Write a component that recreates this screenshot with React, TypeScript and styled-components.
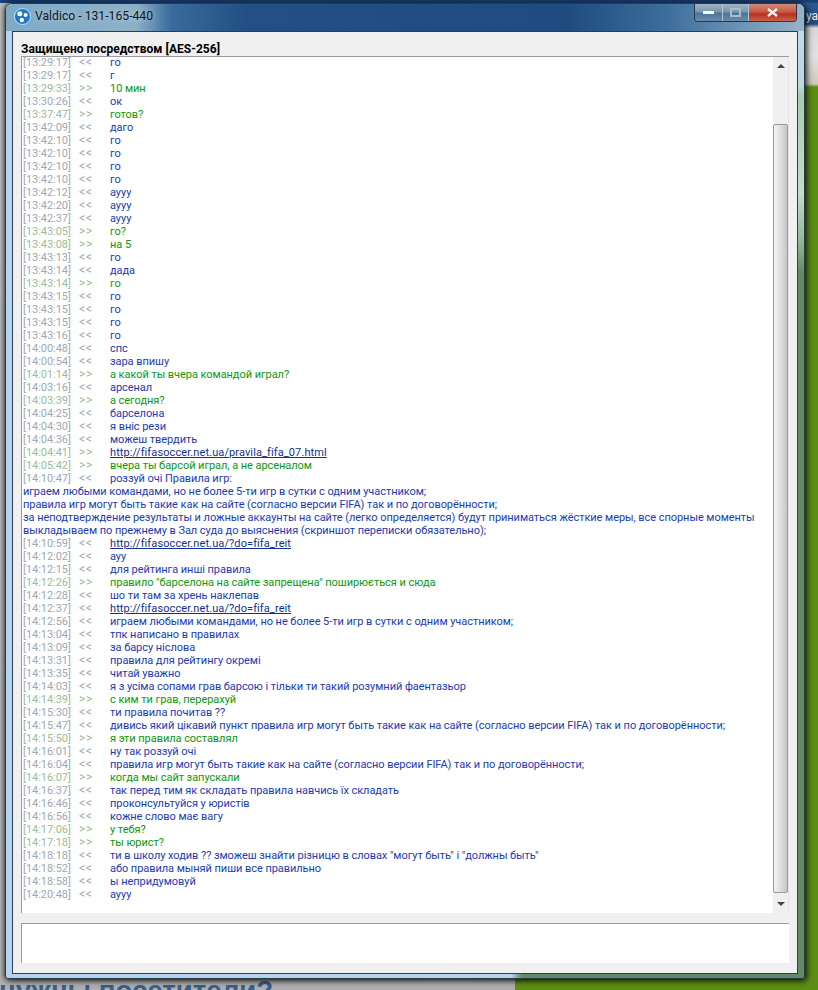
import React from "react";
import styled, { createGlobalStyle } from "styled-components";

const Global = createGlobalStyle`
  html, body { margin: 0; padding: 0; width: 818px; height: 990px; overflow: hidden; background: #5b8f14; }
  #root { width: 818px; height: 990px; }
  * { box-sizing: border-box; }
`;

const Desktop = styled.div`
  position: relative;
  width: 818px;
  height: 990px;
  overflow: hidden;
  padding: 3px 0 0 5px;
  background:
    linear-gradient(180deg, #17396b 0, #1d4a82 3px, transparent 3px) no-repeat 0 0 / 100% 3px,
    linear-gradient(180deg, #2a5d94 0, #1f4b80 24px, #d8d8d8 28px, #e2e2e2 56px, #cfcabb 84px, #5b8f14 87px, #5b8f14 100%) no-repeat right top / 303px 100%,
    linear-gradient(180deg, #b8b8b8, #aeb0b0) no-repeat 0 0 / 515px 100%,
    #5b8f14;
  font-family: "Roboto", Tahoma, sans-serif;
`;

const BehindHeadline = styled.div`
  position: absolute;
  left: -1px;
  top: 975px;
  height: 15px;
  overflow: hidden;
  font: bold 27.6px/32px "Liberation Sans", Arial, sans-serif;
  color: #3c5e88;
  white-space: nowrap;
`;

const BehindTab = styled.div`
  position: absolute;
  right: 0;
  top: 9px;
  font: 12px/14px "Roboto", sans-serif;
  color: #e8eef4;
  white-space: nowrap;
`;

const Frame = styled.div`
  position: relative;
  display: flex;
  flex-direction: column;
  width: 800px;
  height: 976px;
  border: 1px solid #2a3a44;
  border-radius: 7px 7px 3px 3px;
  background:
    linear-gradient(180deg, #c6dae8 0, #bcd6e2 82px, #a8ccb0 92px, #c4dcc8 190px, #8fb496 240px, #5f8c64 268px, #5f8c64 100%) no-repeat right top / 7px 100%,
    linear-gradient(90deg, #b6d3ee 0, #b8d4ee 505px, #5f8c64 516px, #5f8c64 100%);
  box-shadow: 2px 2px 6px rgba(0, 0, 0, 0.75), -1px 0 4px rgba(0, 0, 0, 0.55);
`;

const TitleBar = styled.div`
  position: relative;
  flex: none;
  display: flex;
  align-items: center;
  gap: 4px;
  height: 27px;
  padding: 0 7px 2px 8px;
  border-radius: 6px 6px 0 0;
  background: linear-gradient(90deg, #7faac6 0, #8db0c8 130px, #3a6b9c 165px, #234f84 240px, #1f4b80 560px, #3d6d9c 660px, #94b2c8 795px);
`;

const TitleText = styled.span`
  font: 12.2px/15px "Roboto", sans-serif;
  color: #0e1a24;
  text-shadow: 0 0 7px rgba(255, 255, 255, 0.6);
`;

const WindowButtons = styled.div`
  display: flex;
  align-self: flex-start;
  margin-left: auto;
  width: 103px;
  height: 18px;
  border: 1px solid #26384a;
  border-top: none;
  border-radius: 0 0 4px 4px;
  overflow: hidden;
`;

const WinButton = styled.div<{ $kind: "min" | "max" | "close" }>`
  display: flex;
  align-items: center;
  justify-content: center;
  width: ${(p) => (p.$kind === "close" ? "47px" : p.$kind === "max" ? "27px" : "28px")};
  border-right: ${(p) => (p.$kind === "close" ? "none" : "1px solid #b4c6d4")};
  background: ${(p) =>
    p.$kind === "close"
      ? "linear-gradient(180deg, #d08a7c 0, #c85a44 45%, #b8321e 60%, #c9624a 100%)"
      : "linear-gradient(180deg, #a2b4c6 0, #7a96b0 45%, #4f7498 55%, #6a8cac 100%)"};
`;

const Client = styled.div`
  flex: none;
  display: flex;
  flex-direction: column;
  width: 786px;
  height: 943px;
  margin-left: 6px;
  padding: 0 8px;
  border: 1px solid #2c3e50;
  background: #f0f0f0;
`;

const SecureLabel = styled.div`
  flex: none;
  height: 24px;
  padding-top: 10px;
  font: bold 12px/14px "Roboto", sans-serif;
  letter-spacing: 0.03px;
  color: #000;
`;

const LogPane = styled.div`
  flex: none;
  display: flex;
  width: 768px;
  height: 857px;
  border-top: 1px solid #9c9c9c;
  border-left: 1px solid #9c9c9c;
  background: #fff;
`;

const Log = styled.div`
  flex: 1;
  min-width: 0;
  overflow: hidden;
  padding-left: 1px;
  font: 11px/13px "Roboto", sans-serif;
  letter-spacing: -0.05px;
`;

const Row = styled.div<{ $side: "in" | "out" }>`
  display: flex;
  height: 13px;
  white-space: nowrap;
  color: ${(p) => (p.$side === "in" ? "#1b3bb0" : "#0c980c")};
  &:first-child {
    margin-top: -1px;
  }
`;

const Stamp = styled.span<{ $side: "in" | "out" }>`
  display: flex;
  width: 87px;
  flex: none;
  color: ${(p) => (p.$side === "in" ? "#a0a8b2" : "#9dbb98")};
`;

const Time = styled.span`
  width: 56px;
  flex: none;
`;

const Arrows = styled.span`
  font-size: 12px;
  letter-spacing: 0.6px;
`;

const Link = styled.span`
  color: #12308e;
  letter-spacing: 0.1px;
  text-decoration: underline;
`;

const Wrapped = styled.div`
  height: 13px;
  color: #1b3bb0;
  white-space: nowrap;
`;

const Scrollbar = styled.div`
  position: relative;
  flex: none;
  width: 16px;
  background: #f0f0f0;
  border-right: 1px solid #e4e4e4;
`;

const Thumb = styled.div`
  position: absolute;
  left: 0;
  top: 67px;
  width: 15px;
  height: 769px;
  border: 1px solid #9a9a9a;
  border-radius: 2px;
  background: linear-gradient(90deg, #f2f2f2, #dcdcdc 55%, #c6c6c6);
`;

const ArrowUp = styled.div`
  position: absolute;
  left: 4px;
  top: 7px;
  border: 4px solid transparent;
  border-top: none;
  border-bottom: 4px solid #444;
`;

const ArrowDown = styled.div`
  position: absolute;
  left: 4px;
  bottom: 7px;
  border: 4px solid transparent;
  border-bottom: none;
  border-top: 4px solid #444;
`;

const InputBox = styled.div`
  flex: none;
  width: 768px;
  height: 40px;
  margin-top: 10px;
  border-top: 1px solid #9c9c9c;
  border-left: 1px solid #9c9c9c;
  background: #fff;
`;

type Line = { t: string; s: "in" | "out"; m: string; link?: boolean; extra?: string[] };

const I = (t: string, m: string, link?: boolean): Line => ({ t, s: "in", m, link });
const O = (t: string, m: string, link?: boolean): Line => ({ t, s: "out", m, link });

const lines: Line[] = [
  I("13:29:17", "го"), I("13:29:17", "г"), O("13:29:33", "10 мин"), I("13:30:26", "ок"), O("13:37:47", "готов?"),
  I("13:42:09", "даго"), I("13:42:10", "го"), I("13:42:10", "го"), I("13:42:10", "го"), I("13:42:10", "го"),
  I("13:42:12", "аууу"), I("13:42:20", "аууу"), I("13:42:37", "аууу"), O("13:43:05", "го?"), O("13:43:08", "на 5"),
  I("13:43:13", "го"), I("13:43:14", "дада"), O("13:43:14", "го"), I("13:43:15", "го"), I("13:43:15", "го"),
  I("13:43:15", "го"), I("13:43:16", "го"), I("14:00:48", "спс"), I("14:00:54", "зара впишу"),
  O("14:01:14", "а какой ты вчера командой играл?"), I("14:03:16", "арсенал"), O("14:03:39", "а сегодня?"),
  I("14:04:25", "барселона"), I("14:04:30", "я вніс рези"), I("14:04:36", "можеш твердить"),
  O("14:04:41", "http://fifasoccer.net.ua/pravila_fifa_07.html", true), O("14:05:42", "вчера ты барсой играл, а не арсеналом"),
  {
    t: "14:10:47", s: "in", m: "роззуй очі Правила игр:",
    extra: [
      "играем любыми командами, но не более 5-ти игр в сутки с одним участником;",
      "правила игр могут быть такие как на сайте (согласно версии FIFA) так и по договорённости;",
      "за неподтверждение результаты и ложные аккаунты на сайте (легко определяется) будут приниматься жёсткие меры, все спорные моменты",
      "выкладываем по прежнему в Зал суда до выяснения (скриншот переписки обязательно);",
    ],
  },
  I("14:10:59", "http://fifasoccer.net.ua/?do=fifa_reit", true), I("14:12:02", "ауу"), I("14:12:15", "для рейтинга инші правила"),
  O("14:12:26", "правило \"барселона на сайте запрещена\" поширюється и сюда"), I("14:12:28", "шо ти там за хрень наклепав"),
  I("14:12:37", "http://fifasoccer.net.ua/?do=fifa_reit", true),
  I("14:12:56", "играем любыми командами, но не более 5-ти игр в сутки с одним участником;"),
  I("14:13:04", "тпк написано в правилах"), I("14:13:09", "за барсу ніслова"), I("14:13:31", "правила для рейтингу окремі"),
  I("14:13:35", "читай уважно"), I("14:14:03", "я з усіма сопами грав барсою і тільки ти такий розумний фаентазьор"),
  O("14:14:39", "с ким ти грав, перерахуй"), I("14:15:30", "ти правила почитав ??"),
  I("14:15:47", "дивись який цікавий пункт правила игр могут быть такие как на сайте (согласно версии FIFA) так и по договорённости;"),
  O("14:15:50", "я эти правила составлял"), I("14:16:01", "ну так роззуй очі"),
  I("14:16:04", "правила игр могут быть такие как на сайте (согласно версии FIFA) так и по договорённости;"),
  O("14:16:07", "когда мы сайт запускали"), I("14:16:37", "так перед тим як складать правила навчись їх складать"),
  I("14:16:46", "проконсультуйся у юристів"), I("14:16:56", "кожне слово має вагу"), O("14:17:06", "у тебя?"), O("14:17:18", "ты юрист?"),
  I("14:18:18", "ти в школу ходив ?? зможеш знайти різницю в словах \"могут быть\" і \"должны быть\""),
  I("14:18:52", "або правила мыняй пиши все правильно"), I("14:18:58", "ы непридумовуй"), I("14:20:48", "аууу"),
];

const Logo = () => (
  <svg width="17" height="17" viewBox="0 0 17 17">
    <circle cx="8.5" cy="8.5" r="8" fill="#1f78c8" stroke="#d4e8f8" strokeWidth="0.9" />
    <circle cx="5.8" cy="5.8" r="2.5" fill="#fff" />
    <circle cx="11.6" cy="7" r="2" fill="#fff" />
    <circle cx="7.8" cy="12" r="2.2" fill="#fff" />
  </svg>
);

export default function App() {
  return (
    <Desktop>
      <Global />
      <BehindHeadline>нужны посетители?</BehindHeadline>
      <BehindTab>ya</BehindTab>
      <Frame>
        <TitleBar>
          <Logo />
          <TitleText>Valdico - 131-165-440</TitleText>
          <WindowButtons>
            <WinButton $kind="min">
              <svg width="11" height="5" viewBox="0 0 11 5"><rect y="1" width="11" height="3" fill="#f4f6f8" /></svg>
            </WinButton>
            <WinButton $kind="max">
              <svg width="11" height="9" viewBox="0 0 11 9"><rect x="1" y="1" width="9" height="7" fill="none" stroke="#a9bccc" strokeWidth="2" /></svg>
            </WinButton>
            <WinButton $kind="close">
              <svg width="11" height="9" viewBox="0 0 11 9"><path d="M1 1l9 7M10 1L1 8" stroke="#f6f1ee" strokeWidth="2.4" /></svg>
            </WinButton>
          </WindowButtons>
        </TitleBar>
        <Client>
          <SecureLabel>Защищено посредством [AES-256]</SecureLabel>
          <LogPane>
            <Log>
              {lines.map((l, i) => (
                <React.Fragment key={i}>
                  <Row $side={l.s}>
                    <Stamp $side={l.s}>
                      <Time>[{l.t}]</Time>
                      <Arrows>{l.s === "in" ? "<<" : ">>"}</Arrows>
                    </Stamp>
                    {l.link ? <Link>{l.m}</Link> : <span>{l.m}</span>}
                  </Row>
                  {l.extra?.map((e) => <Wrapped key={e}>{e}</Wrapped>)}
                </React.Fragment>
              ))}
            </Log>
            <Scrollbar>
              <ArrowUp />
              <Thumb />
              <ArrowDown />
            </Scrollbar>
          </LogPane>
          <InputBox />
        </Client>
      </Frame>
    </Desktop>
  );
}
